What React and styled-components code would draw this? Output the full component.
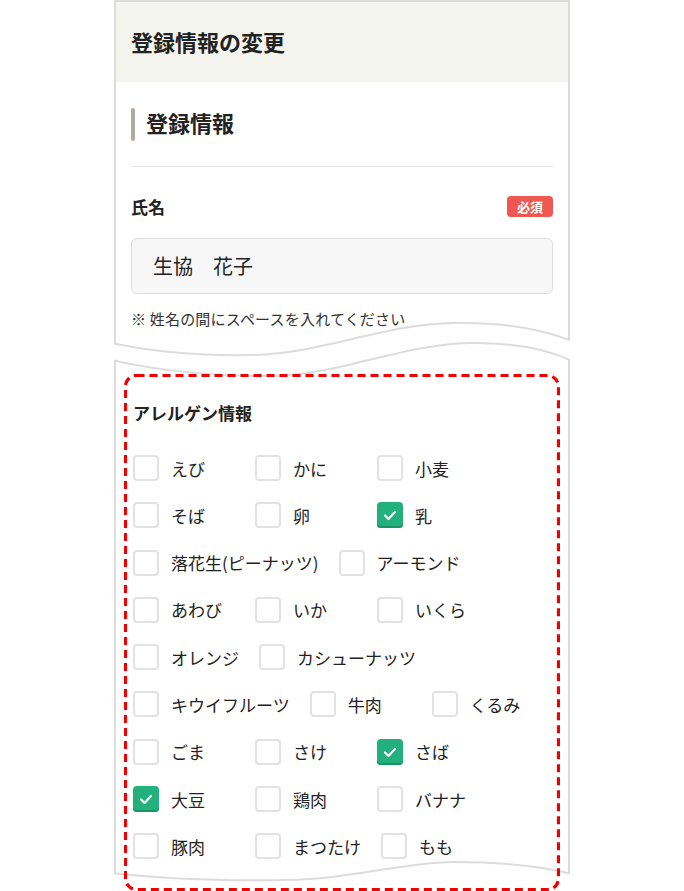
import styled, { createGlobalStyle } from "styled-components"

const GlobalStyle = createGlobalStyle`
  body {
    margin: 0;
    background: #fff;
    color: #222;
    font-family: "Noto Sans CJK JP", "Noto Sans", sans-serif;
  }
`

const Page = styled.div`
  position: relative;
  display: flex;
  flex-direction: column;
  width: 456px;
  height: 891px;
  margin: 0 auto;
  overflow: hidden;
`

const Sheet = styled.div`
  border-left: 2px solid #dcdcdc;
  border-right: 2px solid #dcdcdc;
  border-top: ${p => (p.first ? "2px solid #dcdcdc" : "none")};
  background: #fff;
  flex: ${p => (p.grow ? 1 : "none")};
`

const Header = styled.div`
  display: flex;
  align-items: center;
  height: 80px;
  padding: 0 0 2px 15px;
  box-sizing: border-box;
  background: #f4f4ef;
  font-size: 22px;
  font-weight: 700;
`

const Body = styled.div`
  padding: ${p => p.pad};
`

const SectionTitle = styled.div`
  display: flex;
  align-items: center;
  gap: 11px;
  margin-top: 26px;
  height: 32px;
  font-size: 22px;
  font-weight: 700;
  &::before {
    content: "";
    width: 4px;
    height: 33px;
    border-radius: 2px;
    background: #b3aa9e;
  }
`

const TitleText = styled.span`
  line-height: 28px;
  padding-bottom: 4px;
`

const Divider = styled.div`
  margin-top: 26px;
  height: 1px;
  background: #e6e6e6;
`

const FieldHead = styled.div`
  display: flex;
  justify-content: space-between;
  align-items: center;
  margin-top: 29px;
  height: 21px;
`

const Label = styled.div`
  font-size: 17px;
  font-weight: 700;
`

const Badge = styled.span`
  display: inline-flex;
  align-items: center;
  justify-content: center;
  width: 46px;
  height: 21px;
  border-radius: 4px;
  background: #ee5850;
  color: #fff;
  font-size: 13px;
  font-weight: 700;
`

const Input = styled.div`
  display: flex;
  align-items: center;
  box-sizing: border-box;
  margin-top: 21px;
  height: 56px;
  padding: 0 0 2px 21px;
  border: 1px solid #dedede;
  border-radius: 6px;
  background: #f7f7f7;
  font-size: 20px;
`

const Note = styled.div`
  margin-top: 14px;
  font-size: 15px;
  line-height: 22px;
  letter-spacing: 0.2px;
  color: #333;
`

const GroupTitle = styled.div`
  font-size: 17px;
  font-weight: 700;
  line-height: 25px;
`

const Checks = styled.div`
  display: flex;
  flex-wrap: wrap;
  column-gap: 20px;
  row-gap: 21.3px;
  margin-top: 30px;
`

const Item = styled.label`
  display: flex;
  align-items: center;
  gap: 12px;
  min-width: 102px;
  height: 26px;
  font-size: 17px;
  white-space: nowrap;
`

const Box = styled.span`
  display: flex;
  align-items: center;
  justify-content: center;
  box-sizing: border-box;
  width: 26px;
  height: 26px;
  border-radius: 4px;
  border: ${p => (p.on ? "none" : "2px solid #e2e2e2")};
  background: ${p => (p.on ? "#22b07d" : "#fff")};
  box-shadow: ${p => (p.on ? "inset 0 -2px 0 #1a9466" : "none")};
`

const Overlay = styled.svg`
  position: absolute;
  left: ${p => p.x}px;
  top: ${p => p.y}px;
  pointer-events: none;
`

const allergens = [
  ["えび"], ["かに"], ["小麦"],
  ["そば"], ["卵"], ["乳", true],
  ["落花生(ピーナッツ)"], ["アーモンド"],
  ["あわび"], ["いか"], ["いくら"],
  ["オレンジ"], ["カシューナッツ"],
  ["キウイフルーツ"], ["牛肉"], ["くるみ"],
  ["ごま"], ["さけ"], ["さば", true],
  ["大豆", true], ["鶏肉"], ["バナナ"],
  ["豚肉"], ["まつたけ"], ["もも"],
]

const upperWave = "M-2 27 C 40 36, 90 40, 140 39 C 210 37, 270 8, 340 7 C 390 6, 430 14, 458 25"
const lowerWave = "M-2 44 C 40 54, 100 61, 160 60 C 230 58, 290 27, 360 27 C 400 27, 435 34, 458 45"
const gapFill = upperWave + " L458 45 C 435 34, 400 27, 360 27 C 290 27, 230 58, 160 60 C 100 61, 40 54, -2 44 Z"
const bottomWave = "M-2 23 C 50 29, 110 31, 170 30 C 240 29, 290 12, 340 12 C 390 12, 430 17, 458 24"

const Check = () => (
  <svg width="14" height="14" viewBox="0 0 14 14">
    <polyline points="2,7.5 5.5,11 12,4" fill="none" stroke="#fff" strokeWidth="2.2" strokeLinecap="round" strokeLinejoin="round" />
  </svg>
)

const App = () => {
  return (
    <>
      <GlobalStyle />
      <Page>
        <Sheet first>
          <Header>登録情報の変更</Header>
          <Body pad="0 15px 9px">
            <SectionTitle>
              <TitleText>登録情報</TitleText>
            </SectionTitle>
            <Divider />
            <FieldHead>
              <Label>氏名</Label>
              <Badge>必須</Badge>
            </FieldHead>
            <Input>生協　花子</Input>
            <Note>※ 姓名の間にスペースを入れてください</Note>
          </Body>
        </Sheet>
        <Sheet grow>
          <Body pad="61px 16px 0 17px">
            <GroupTitle>アレルゲン情報</GroupTitle>
            <Checks>
              {allergens.map(([name, on], idx) => (
                <Item key={idx}>
                  <Box on={on}>{on && <Check />}</Box>
                  {name}
                </Item>
              ))}
            </Checks>
          </Body>
        </Sheet>

        {/* torn edge between the two screen pieces */}
        <Overlay x={-2} y={316} width="460" height="70" viewBox="-2 0 460 70">
          <path d={gapFill} fill="#fff" />
          <path d={upperWave} fill="none" stroke="#dcdcdc" strokeWidth="2" />
          <path d={lowerWave} fill="none" stroke="#dcdcdc" strokeWidth="2" />
        </Overlay>
        <Overlay x={-2} y={850} width="460" height="41" viewBox="-2 0 460 41">
          <path d={bottomWave + " L458 41 L-2 41 Z"} fill="#fff" />
          <path d={bottomWave} fill="none" stroke="#dcdcdc" strokeWidth="2" />
        </Overlay>

        {/* red dashed highlight */}
        <Overlay x={10} y={374} width="436" height="518">
          <rect x="1.5" y="1.5" width="433" height="514" rx="11" fill="none" stroke="#f00000" strokeWidth="3.2" strokeDasharray="8 5" />
        </Overlay>
      </Page>
    </>
  )
}

export default App
